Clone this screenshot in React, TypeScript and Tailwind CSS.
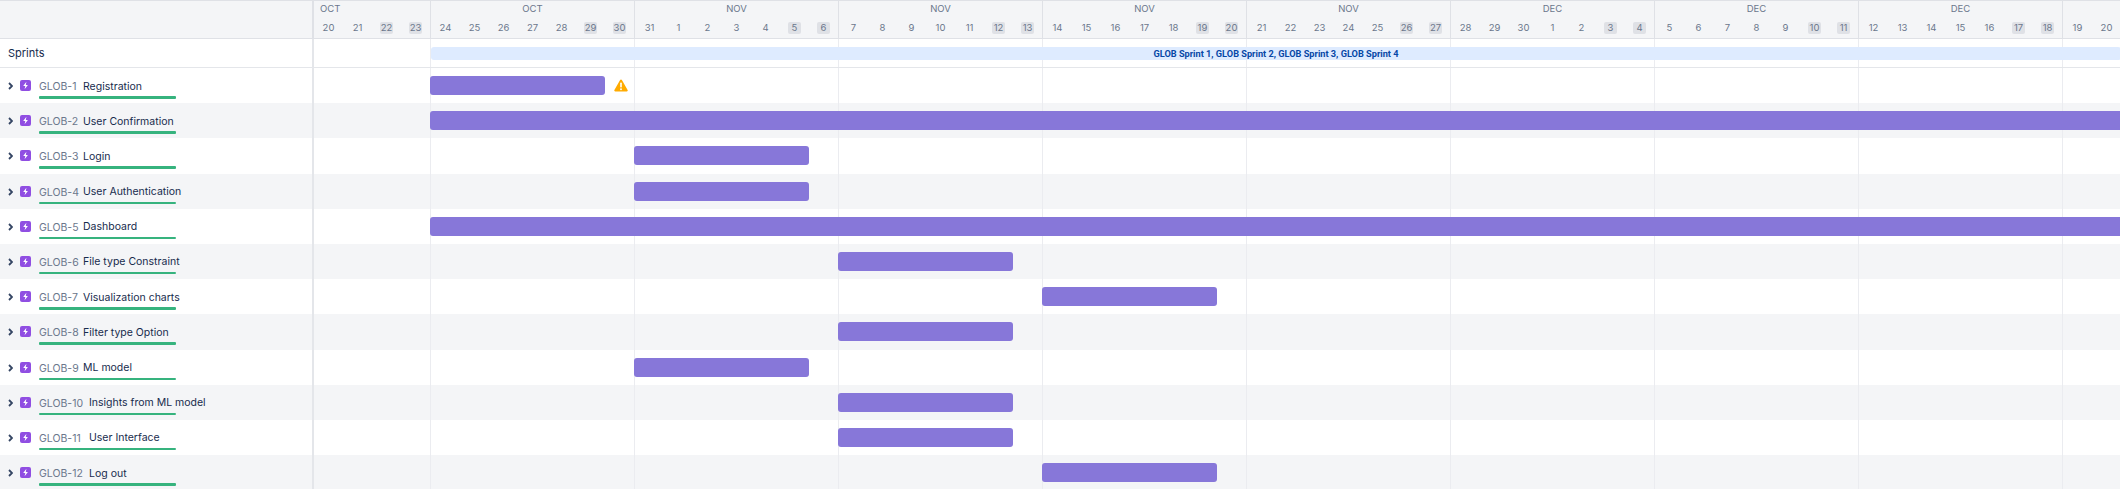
const weeks = [
  { label: "OCT", days: [24, 25, 26, 27, 28, 29, 30] },
  { label: "NOV", days: [31, 1, 2, 3, 4, 5, 6] },
  { label: "NOV", days: [7, 8, 9, 10, 11, 12, 13] },
  { label: "NOV", days: [14, 15, 16, 17, 18, 19, 20] },
  { label: "NOV", days: [21, 22, 23, 24, 25, 26, 27] },
  { label: "DEC", days: [28, 29, 30, 1, 2, 3, 4] },
  { label: "DEC", days: [5, 6, 7, 8, 9, 10, 11] },
  { label: "DEC", days: [12, 13, 14, 15, 16, 17, 18] },
];

const B1 = "left-[116px] w-[175px]";
const BF = "left-[116px] w-[1900px]";
const B3 = "left-[320px] w-[175px]";
const B6 = "left-[524px] w-[175px]";
const B7 = "left-[728px] w-[175px]";

const rows = [
  { key: "GLOB-1", title: "Registration", bar: B1, warn: true },
  { key: "GLOB-2", title: "User Confirmation", bar: BF },
  { key: "GLOB-3", title: "Login", bar: B3 },
  { key: "GLOB-4", title: "User Authentication", bar: B3 },
  { key: "GLOB-5", title: "Dashboard", bar: BF },
  { key: "GLOB-6", title: "File type Constraint", bar: B6 },
  { key: "GLOB-7", title: "Visualization charts", bar: B7 },
  { key: "GLOB-8", title: "Filter type Option", bar: B6 },
  { key: "GLOB-9", title: "ML model", bar: B3 },
  { key: "GLOB-10", title: "Insights from ML model", bar: B6 },
  { key: "GLOB-11", title: "User Interface", bar: B6 },
  { key: "GLOB-12", title: "Log out", bar: B7 },
];

function Day({ n, weekend }: { n: number; weekend: boolean }) {
  return (
    <div className="flex-1 flex justify-center">
      <span className={`w-[13px] h-[12px] flex items-center justify-center rounded-[2px] text-[9.5px] leading-none text-[#6b778c] ${weekend ? "bg-[#dfe1e6]" : ""}`}>
        {n}
      </span>
    </div>
  );
}

function GridCells() {
  return (
    <>
      <div className="w-[116px] shrink-0" />
      {weeks.map((_, i) => (
        <div key={i} className="w-[204px] shrink-0 border-l border-[#ebecf0]" />
      ))}
      <div className="w-[60px] shrink-0 border-l border-[#ebecf0]" />
    </>
  );
}

function Story() {
  return (
    <svg width="11" height="11" viewBox="0 0 11 11" className="shrink-0">
      <rect width="11" height="11" rx="2" fill="#904ee2" />
      <path d="M6.4 1.8 3.2 6h2.1L4.6 9.2 7.9 5H5.8z" fill="#fff" />
    </svg>
  );
}

export default function App() {
  return (
    <div className="w-[2120px] h-[489px] overflow-hidden bg-white font-['Inter',sans-serif]">
      {/* header */}
      <div className="flex h-[39px] bg-[#f4f5f7] border-t border-b border-[#dfe1e6]">
        <div className="w-[314px] shrink-0 border-r-2 border-[#dfe1e6]" />
        <div className="flex">
          <div className="w-[116px] shrink-0 flex flex-col">
            <div className="h-[17px] pl-[6px] flex items-center text-[9.5px] text-[#6b778c]">OCT</div>
            <div className="flex mt-[4px]">
              {[20, 21, 22, 23].map((d, i) => (
                <Day key={d} n={d} weekend={i >= 2} />
              ))}
            </div>
          </div>
          {weeks.map((w, i) => (
            <div key={i} className="w-[204px] shrink-0 border-l border-[#dfe1e6] flex flex-col">
              <div className="h-[17px] flex items-center justify-center text-[9.5px] text-[#6b778c]">{w.label}</div>
              <div className="flex mt-[4px]">
                {w.days.map((d, j) => (
                  <Day key={j} n={d} weekend={j >= 5} />
                ))}
              </div>
            </div>
          ))}
          <div className="w-[59px] shrink-0 border-l border-[#dfe1e6] flex flex-col">
            <div className="h-[17px]" />
            <div className="flex mt-[4px]">
              <Day n={19} weekend={false} />
              <Day n={20} weekend={false} />
            </div>
          </div>
        </div>
      </div>
      {/* sprints */}
      <div className="flex h-[29px] border-b border-[#e4e6ea]">
        <div className="w-[314px] shrink-0 border-r-2 border-[#e4e6ea] pl-[8px] flex items-center text-[11px] text-[#172b4d]">
          Sprints
        </div>
        <div className="relative flex">
          <GridCells />
          <div className="absolute left-[117px] w-[1690px] top-[8px] h-[13px] rounded-[3px] bg-[#deebff] flex items-center justify-center font-['Roboto',sans-serif] text-[9.2px] font-bold text-[#0747a6] whitespace-nowrap">
            GLOB Sprint 1, GLOB Sprint 2, GLOB Sprint 3, GLOB Sprint 4
          </div>
        </div>
      </div>
      {/* rows */}
      {rows.map((r, i) => (
        <div key={r.key} className={`flex h-[35.2px] ${i % 2 === 1 ? "bg-[#f4f5f7]" : "bg-white"}`}>
          <div className="w-[314px] shrink-0 border-r-2 border-[#e4e6ea] flex items-start pl-[8px] pt-[11px]">
            <svg width="5" height="8" viewBox="0 0 5 8" className="mt-[3px] shrink-0">
              <path d="M1 1l3 3-3 3" fill="none" stroke="#344563" strokeWidth="1.8" />
            </svg>
            <div className="ml-[7px] mt-[1px]"><Story /></div>
            <div className="ml-[8px] relative w-[137px] h-[20px]">
              <div className="flex items-center gap-[6px] whitespace-nowrap">
                <span className={`text-[10.5px] leading-[13px] text-[#6b778c] mt-[1px] ${r.key.length > 6 ? "w-[44px]" : "w-[38px]"}`}>{r.key}</span>
                <span className="text-[10.5px] leading-[13px] text-[#172b4d]">{r.title}</span>
              </div>
              <div className="absolute left-0 top-[17px] w-[137px] h-[2.5px] rounded-[1px] bg-[#36b37e]" />
            </div>
          </div>
          <div className="relative flex">
            <GridCells />
            <div className={`absolute top-[8px] h-[19px] rounded-[3px] bg-[#8777d9] ${r.bar}`} />
            {r.warn && (
              <svg width="14" height="13" viewBox="0 0 14 13" className="absolute left-[300px] top-[11px]">
                <path d="M7 .6c.4 0 .7.2.9.5l5.7 10c.4.7-.1 1.5-.9 1.5H1.3c-.8 0-1.3-.8-.9-1.5l5.7-10c.2-.3.5-.5.9-.5z" fill="#ffab00" />
                <rect x="6.2" y="3.6" width="1.6" height="4.8" rx=".6" fill="#fff" />
                <circle cx="7" cy="10.2" r=".95" fill="#fff" />
              </svg>
            )}
          </div>
        </div>
      ))}
    </div>
  );
}
